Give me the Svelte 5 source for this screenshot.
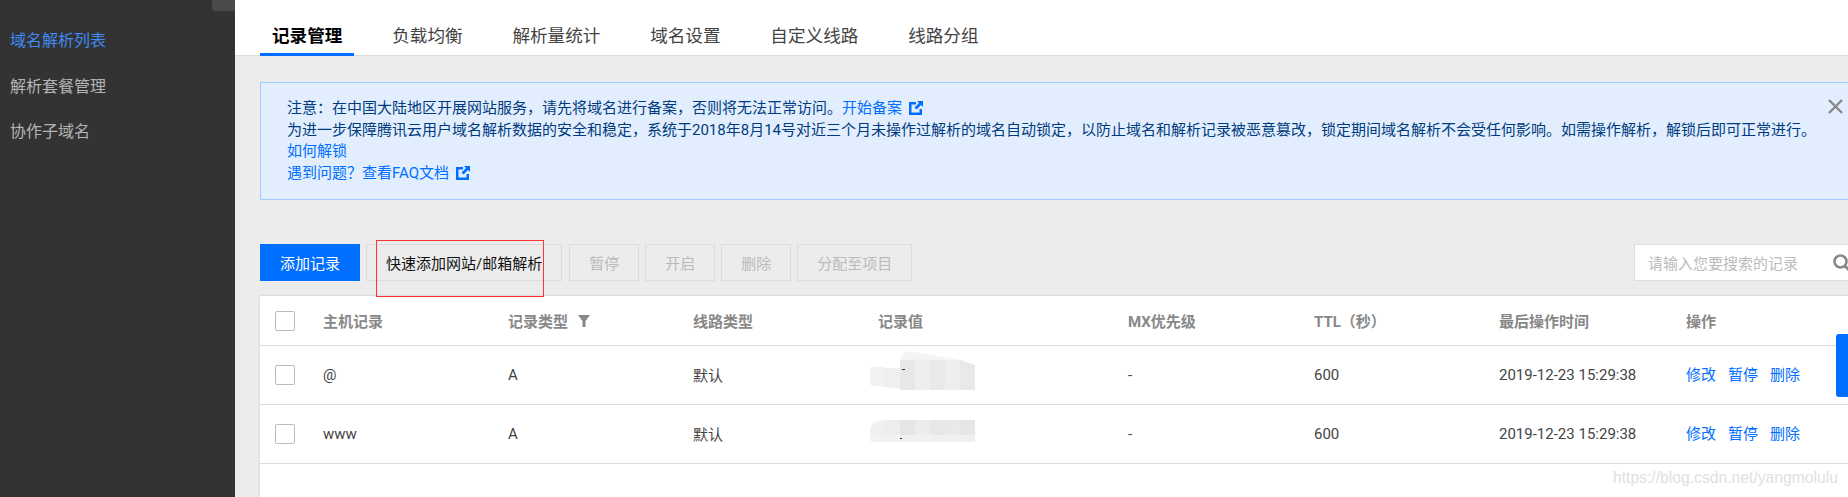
<script>
  const menu = ["域名解析列表", "解析套餐管理", "协作子域名"];
  const tabs = ["记录管理", "负载均衡", "解析量统计", "域名设置", "自定义线路", "线路分组"];
  const disabled = ["暂停", "开启", "删除", "分配至项目"];
  const records = [
    { host: "@", patch: "a" },
    { host: "www", patch: "b" },
  ];
</script>

{#snippet ext()}
  <svg class="ext" viewBox="0 0 14 14" width="14" height="14">
    <path d="M0 1h7v2.5H2.5v8h8V8H13v6H0z" fill="#006eff" />
    <path d="M8 0h6v6l-2-2-4.5 4.5-2-2L10 2z" fill="#006eff" />
  </svg>
{/snippet}

<div class="page">
  <aside class="side">
    <span class="handle"></span>
    {#each menu as item, i}
      <div class="item" class:on={i === 0}>{item}</div>
    {/each}
  </aside>

  <div class="main">
    <nav class="tabs">
      {#each tabs as tab, i}
        <div class="tab" class:active={i === 0}>{tab}</div>
      {/each}
    </nav>

    <section class="notice">
      <p>注意：在中国大陆地区开展网站服务，请先将域名进行备案，否则将无法正常访问。<a href="#a">开始备案</a>{@render ext()}</p>
      <p>为进一步保障腾讯云用户域名解析数据的安全和稳定，系统于2018年8月14号对近三个月未操作过解析的域名自动锁定，以防止域名和解析记录被恶意篡改，锁定期间域名解析不会受任何影响。如需操作解析，解锁后即可正常进行。</p>
      <p><a href="#b">如何解锁</a></p>
      <p><a href="#c">遇到问题？查看FAQ文档</a>{@render ext()}</p>
      <svg class="close" viewBox="0 0 15 15" width="15" height="15">
        <path d="M1 1l13 13M14 1L1 14" stroke="#888" stroke-width="2.4" fill="none" />
      </svg>
    </section>

    <div class="toolbar">
      <button class="primary">添加记录</button>
      <button class="quick">快速添加网站/邮箱解析<span class="mark"></span></button>
      {#each disabled as label}
        <button class="off">{label}</button>
      {/each}
      <div class="search">
        <span>请输入您要搜索的记录</span>
        <svg viewBox="0 0 18 18" width="18" height="18">
          <circle cx="7.5" cy="7.5" r="6" stroke="#888" stroke-width="2.6" fill="none" />
          <path d="M12 12l5 5" stroke="#888" stroke-width="2.8" />
        </svg>
      </div>
    </div>

    <div class="table">
      <div class="row head">
        <span class="box"></span>
        <span>主机记录</span>
        <span class="typed">记录类型
          <svg viewBox="0 0 12 12" width="12" height="12">
            <path d="M0 0h12L7.5 6v6h-3V6z" fill="#888" />
          </svg>
        </span>
        <span>线路类型</span>
        <span>记录值</span>
        <span>MX优先级</span>
        <span>TTL（秒）</span>
        <span>最后操作时间</span>
        <span>操作</span>
      </div>
      {#each records as r}
        <div class="row">
          <span class="box"></span>
          <span>{r.host}</span>
          <span>A</span>
          <span class="cjk">默认</span>
          <svg class="blur" viewBox="0 0 105 58" width="105" height="58">
            {#if r.patch === "a"}
              <path d="M30 14q2-8 8-9l52 9z" fill="#f4f4f4" />
              <path d="M0 21h15v20L0 39z" fill="#f2f2f2" />
              <path d="M15 22h15v21l-15-2z" fill="#efefed" />
              <rect x="30" y="14" width="15" height="30" fill="#e6e7e8" />
              <rect x="45" y="14" width="15" height="30" fill="#eeeeee" />
              <rect x="60" y="14" width="15" height="30" fill="#e8e9ea" />
              <rect x="75" y="14" width="15" height="30" fill="#eeeeee" />
              <path d="M90 14l15 5v25H90z" fill="#e9e9e9" />
              <rect x="32" y="23" width="3" height="1" fill="#333" />
            {:else}
              <path d="M0 24q2-8 14-9h1v22H6q-4-2-6-6z" fill="#f0f0f0" />
              <rect x="15" y="15" width="15" height="22" fill="#ededeb" />
              <rect x="30" y="15" width="15" height="22" fill="#e4e5e5" />
              <rect x="45" y="15" width="15" height="22" fill="#ececec" />
              <rect x="60" y="15" width="15" height="22" fill="#e6e8e7" />
              <rect x="75" y="15" width="15" height="22" fill="#e9e9e7" />
              <rect x="90" y="15" width="15" height="22" fill="#e5e6e8" />
              <rect x="0" y="30" width="105" height="7" fill="#f3f3f3" opacity="0.75" />
              <rect x="30" y="33" width="2" height="1" fill="#333" />
            {/if}
          </svg>
          <span>-</span>
          <span>600</span>
          <span>2019-12-23 15:29:38</span>
          <span class="ops"><a href="#e">修改</a><a href="#p">暂停</a><a href="#d">删除</a></span>
        </div>
      {/each}
    </div>
  </div>

  <span class="float"></span>
  <span class="watermark">https://blog.csdn.net/yangmolulu</span>
</div>

<style>
  :global(body) {
    margin: 0;
  }

  .page {
    position: relative;
    display: flex;
    height: 497px;
    overflow: hidden;
    background: #ececec;
    color: #444;
    font-family: Roboto, "Noto Sans CJK SC", sans-serif;
    font-size: 15px;
  }

  .side {
    position: relative;
    flex: 0 0 235px;
    box-sizing: border-box;
    padding: 18px 10px 0;
    background: #333;
    color: #b4b4b4;
    font-size: 16px;
  }

  .handle {
    position: absolute;
    top: 0;
    right: 0;
    width: 23px;
    height: 11px;
    border-bottom-left-radius: 3px;
    background: #4a4a4a;
  }

  .item {
    height: 45.5px;
    line-height: 45.5px;
  }

  .on {
    color: #3f8af5;
  }

  .main {
    flex: 1;
    min-width: 0;
    display: flex;
    flex-direction: column;
  }

  .tabs {
    flex: 0 0 56px;
    box-sizing: border-box;
    display: flex;
    align-items: flex-end;
    gap: 25.8px;
    padding-left: 25px;
    border-bottom: 1px solid #ddd;
    background: #fff;
  }

  .tab {
    padding: 0 12px;
    height: 36px;
    box-sizing: border-box;
    margin-bottom: -1px;
    font-size: 17.6px;
    line-height: 32px;
  }

  .active {
    border-bottom: 3px solid #006eff;
    color: #000;
    font-weight: 700;
  }

  .notice {
    position: relative;
    box-sizing: border-box;
    height: 118px;
    margin: 26px 0 0 25px;
    padding: 14px 0 0 26px;
    border: 1px solid #9fcbff;
    border-right: 0;
    background: #e2eefd;
    color: #003b80;
    line-height: 22px;
  }

  .notice p {
    margin: 0;
    white-space: nowrap;
  }

  .notice p:nth-child(3) {
    margin-top: -1px;
  }

  a {
    color: #006eff;
    text-decoration: none;
  }

  .ext {
    margin-left: 7px;
    vertical-align: -2px;
  }

  .close {
    position: absolute;
    top: 16px;
    right: 5px;
  }

  .toolbar {
    display: flex;
    gap: 6px;
    height: 37px;
    margin: 44px 0 14px 25px;
  }

  button {
    position: relative;
    padding: 0 19px;
    border: 1px solid #ddd;
    background: transparent;
    color: #bbb;
    font: inherit;
    white-space: nowrap;
  }

  .primary {
    border-color: #006eff;
    background: #006eff;
    color: #fff;
  }

  .quick {
    margin-right: 1px;
    color: #111;
  }

  .mark {
    position: absolute;
    top: -5px;
    left: 9px;
    width: 166px;
    height: 55px;
    border: 1px solid #f33;
  }

  .search {
    display: flex;
    align-items: center;
    justify-content: space-between;
    box-sizing: border-box;
    width: 214px;
    margin-left: auto;
    padding-left: 13px;
    overflow: hidden;
    border: 1px solid #ddd;
    border-right: 0;
    background: #fff;
    color: #bbb;
  }

  .search svg {
    flex: none;
    margin-right: -3px;
  }

  .table {
    flex: 1;
    margin-left: 25px;
    background: #fff;
    border-top: 1px solid #ddd;
    box-shadow: 0 1px 3px rgba(0, 0, 0, 0.12);
  }

  .row {
    display: grid;
    grid-template-columns: 48px 185px 185px 185px 250px 186px 185px 187px 1fr;
    align-items: center;
    box-sizing: border-box;
    height: 59px;
    padding-left: 15px;
    border-bottom: 1px solid #ddd;
  }

  .head {
    height: 50px;
    color: #888;
    font-weight: 700;
  }

  .box {
    width: 20px;
    height: 20px;
    box-sizing: border-box;
    border: 1px solid #bbb;
    border-radius: 2px;
    background: #fff;
  }

  .typed svg {
    margin-left: 6px;
    vertical-align: 0;
  }

  .cjk {
    margin-top: -2px;
  }

  .blur {
    display: block;
    margin-left: -8px;
  }

  .ops {
    display: flex;
    gap: 12px;
    margin-top: -3px;
  }

  .float {
    position: absolute;
    top: 334px;
    right: 0;
    width: 12px;
    height: 63px;
    border-radius: 3px 0 0 3px;
    background: #006eff;
  }

  .watermark {
    position: absolute;
    right: 10px;
    top: 469px;
    color: #e0e0e0;
    font-family: "Liberation Sans", sans-serif;
    font-size: 15.7px;
  }
</style>
